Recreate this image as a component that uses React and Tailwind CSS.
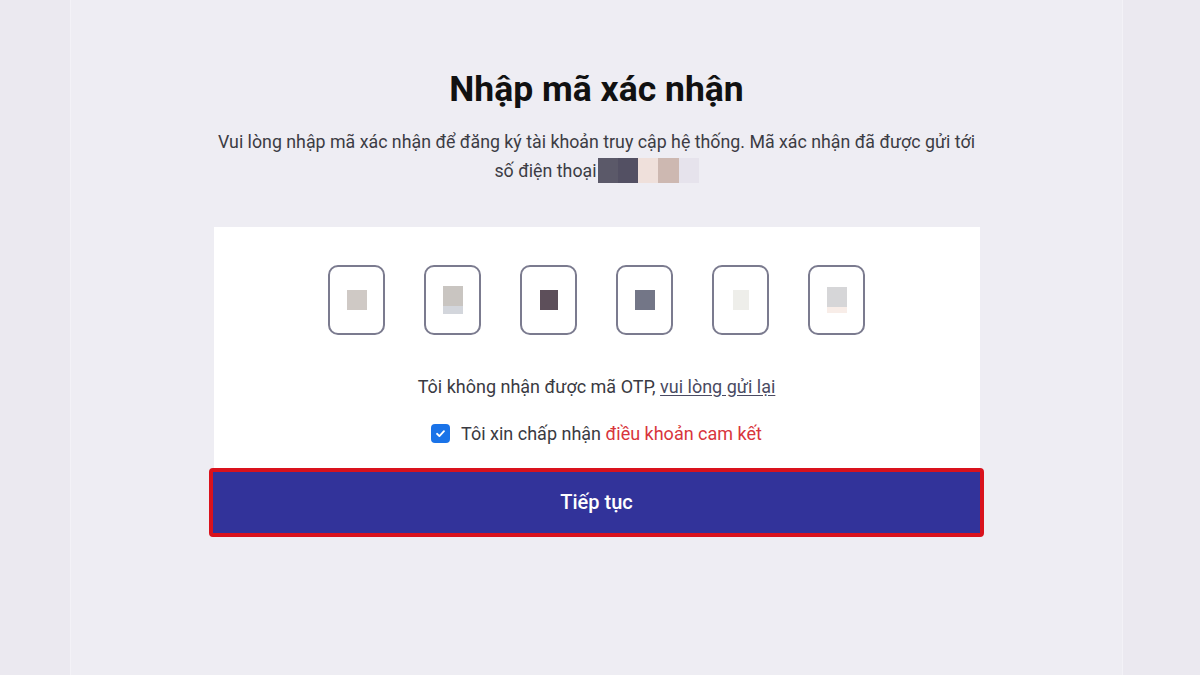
import React from "react";

const otpBlurs = [
  [{ c: "#cfc9c5", w: 20, h: 20 }],
  [{ c: "#c9c5c1", w: 20, h: 20 }, { c: "#d3d6dc", w: 20, h: 8 }],
  [{ c: "#5d4f5a", w: 18, h: 20 }],
  [{ c: "#737687", w: 20, h: 20 }],
  [{ c: "#eeeeea", w: 16, h: 20 }],
  [{ c: "#d6d6d8", w: 20, h: 20 }, { c: "#f8ede8", w: 20, h: 6 }],
];

export default function App() {
  return (
    <div
      className="w-[1200px] h-[675px] bg-[#ebe9f0] flex justify-center pr-[7px] overflow-hidden"
      style={{ fontFamily: "Roboto, 'Noto Sans', Arial, sans-serif" }}
    >
      <div className="w-[1053px] h-full bg-[#eeedf3] border-x border-[#f3f2f7] flex flex-col items-center pt-[67px]">
        <h1 className="text-[35.5px] leading-[44px] font-bold text-[#111]">
          Nhập mã xác nhận
        </h1>
        <p className="mt-[17px] text-[17.8px] leading-[27px] text-[#3c3c44] text-center">
          Vui lòng nhập mã xác nhận để đăng ký tài khoản truy cập hệ thống. Mã xác nhận đã được gửi tới
          <br />
          <span className="inline-flex items-center align-middle">
            số điện thoại
            <span className="inline-flex h-[25px] ml-[1px]">
              <span className="w-[20px] h-full bg-[#5b5969]" />
              <span className="w-[20px] h-full bg-[#535063]" />
              <span className="w-[20px] h-full bg-[#efe0db]" />
              <span className="w-[21px] h-full bg-[#cdb8b1]" />
              <span className="w-[20px] h-full bg-[#e6e3ec]" />
            </span>
          </span>
        </p>

        <div className="mt-[43px] w-[766px] flex flex-col items-center">
          <div className="w-full bg-white flex flex-col items-center pt-[38px] pb-[23px]">
            <div className="flex gap-[39px]">
              {otpBlurs.map((b, i) => (
                <div
                  key={i}
                  className="w-[57px] h-[70px] rounded-[10px] border-2 border-[#7b7b8f] flex flex-col items-center justify-center"
                >
                  {b.map((s, j) => (
                    <span
                      key={j}
                      style={{ background: s.c, width: s.w, height: s.h }}
                    />
                  ))}
                </div>
              ))}
            </div>
            <p className="mt-[40px] text-[18px] leading-[24px] text-[#3a3a42]">
              Tôi không nhận được mã OTP,{" "}
              <span className="underline underline-offset-2 text-[#4a4a62]">vui lòng gửi lại</span>
            </p>
            <div className="mt-[23px] flex items-center gap-[11px]">
              <span className="w-[19px] h-[19px] rounded-[4px] bg-[#1a73e8] flex items-center justify-center">
                <svg width="11" height="11" viewBox="0 0 12 12" fill="none">
                  <path d="M2.2 6.3 L4.8 8.8 L9.8 3.4" stroke="white" strokeWidth="2" strokeLinecap="round" strokeLinejoin="round" />
                </svg>
              </span>
              <span className="text-[18px] leading-[24px] text-[#3a3a42]">
                Tôi xin chấp nhận <span className="text-[#d8353c]">điều khoản cam kết</span>
              </span>
            </div>
          </div>
          <div className="-mt-[1px] w-[775px] h-[69px] rounded-[4px] border-[4px] border-[#d9121d] bg-[#32339a] flex items-center justify-center">
            <span className="text-white text-[20px] font-medium">Tiếp tục</span>
          </div>
        </div>
      </div>
    </div>
  );
}
